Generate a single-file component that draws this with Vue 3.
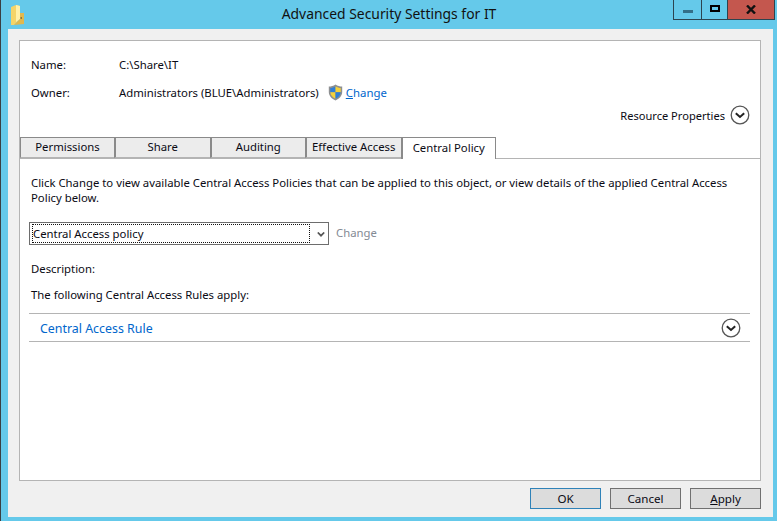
<script setup>
const tabs = ['Permissions', 'Share', 'Auditing', 'Effective Access', 'Central Policy']
const active = 'Central Policy'
</script>

<template>
  <div class="window">
    <header class="titlebar">
      <div class="tb-left">
        <svg class="folder" width="14" height="20" viewBox="0 0 14 20">
          <path d="M0 2 L5 0 L9 1 L9 14 L3 20 L0 20 Z" fill="#f4d468" />
          <path d="M5 0 L9 1 L9 14 L5 17 Z" fill="#fff0a8" />
          <path d="M9 8 L13 8 L13 19 L3 20 L9 14 Z" fill="#e0b84e" />
          <path d="M9.5 12 L11 12 L11 14 L9.5 14 Z" fill="#8a7a3a" />
        </svg>
      </div>
      <div class="title">Advanced Security Settings for IT</div>
      <div class="caption">
        <div class="cbtn min"><span class="min-bar"></span></div>
        <div class="cbtn max"><span class="max-box"></span></div>
        <div class="cbtn close">
          <svg width="10" height="9" viewBox="0 0 10 9"><path d="M1 0.5 L9 8.5 M9 0.5 L1 8.5" stroke="#111" stroke-width="2.4" fill="none" /></svg>
        </div>
      </div>
    </header>

    <div class="body">
      <main class="panel">
        <div class="info">
          <div class="row name-row"><span class="lbl">Name:</span><span>C:\Share\IT</span></div>
          <div class="row owner-row">
            <span class="lbl">Owner:</span>
            <span>Administrators (BLUE\Administrators)</span>
            <svg class="shield" width="15" height="17" viewBox="0 0 15 17">
              <path d="M7.5 0.5 C5.5 2 3 2.6 0.8 2.6 L0.8 8 C0.8 12 4 15 7.5 16.5 C11 15 14.2 12 14.2 8 L14.2 2.6 C12 2.6 9.5 2 7.5 0.5 Z" fill="#8d8f91" />
              <path d="M7.5 2.2 L7.5 8.2 L2.3 8.2 L2.3 4 C4 3.9 6 3.3 7.5 2.2 Z" fill="#2f7fd6" />
              <path d="M7.5 2.2 C9 3.3 11 3.9 12.7 4 L12.7 8.2 L7.5 8.2 Z" fill="#f4d23c" />
              <path d="M2.3 8.2 L7.5 8.2 L7.5 14.8 C5 13.6 2.5 11.2 2.3 8.2 Z" fill="#f4d23c" />
              <path d="M7.5 8.2 L12.7 8.2 C12.5 11.2 10 13.6 7.5 14.8 Z" fill="#2f7fd6" />
            </svg>
            <span class="link"><u>C</u>hange</span>
          </div>
          <div class="res">
            <span>Resource Properties</span>
            <svg class="chev" width="20" height="20" viewBox="0 0 20 20">
              <circle cx="10" cy="10" r="8.8" fill="#fff" stroke="#555" stroke-width="1.3" />
              <path d="M5.8 8.2 L10 12 L14.2 8.2" fill="none" stroke="#222" stroke-width="2" />
            </svg>
          </div>
        </div>

        <nav class="tabs">
          <div v-for="t in tabs" :key="t" class="tab" :class="{ on: t === active }">{{ t }}</div>
        </nav>

        <section class="content">
          <p class="desc">Click Change to view available Central Access Policies that can be applied to this object, or view details of the applied Central Access<br>Policy below.</p>
          <div class="select-row">
            <div class="select">
              <div class="focus">Central Access policy</div>
              <svg class="arrow" width="8" height="5" viewBox="0 0 8 5"><path d="M0.8 0.5 L4 3.7 L7.2 0.5" fill="none" stroke="#555" stroke-width="1.7" /></svg>
            </div>
            <span class="disabled">Change</span>
          </div>
          <div class="desc-label">Description:</div>
          <div class="rules-label">The following Central Access Rules apply:</div>
          <div class="rule">
            <span class="rule-name">Central Access Rule</span>
            <svg class="chev" width="20" height="20" viewBox="0 0 20 20">
              <circle cx="10" cy="10" r="8.8" fill="#fff" stroke="#555" stroke-width="1.3" />
              <path d="M5.8 8.2 L10 12 L14.2 8.2" fill="none" stroke="#222" stroke-width="2" />
            </svg>
          </div>
        </section>
      </main>

      <footer class="buttons">
        <div class="btn default">OK</div>
        <div class="btn">Cancel</div>
        <div class="btn"><span><u>A</u>pply</span></div>
      </footer>
    </div>
  </div>
</template>

<style>
html, body { margin: 0; padding: 0; background: #65c9ea; }
</style>

<style scoped>
.window {
  width: 777px;
  height: 521px;
  box-sizing: border-box;
  background: #65c9ea;
  border-left: 1px solid #3a3f42;
  display: flex;
  flex-direction: column;
  font-family: "Noto Sans", "Open Sans", sans-serif;
  font-size: 11.33px;
  color: #0a0a14;
  overflow: hidden;
}
.titlebar {
  height: 29px;
  flex: none;
  display: grid;
  grid-template-columns: 1fr auto 1fr;
}
.tb-left { padding: 5px 0 0 10px; }
.folder { display: block; }
.title {
  font-size: 13.9px;
  line-height: 18px;
  padding-top: 5px;
  color: #111;
}
.caption {
  justify-self: end;
  display: flex;
  align-items: flex-start;
  margin-right: 2px;
  height: 20px;
  border: 1px solid #2c4450;
  border-top: none;
  box-sizing: border-box;
}
.cbtn {
  height: 19px;
  display: flex;
  align-items: center;
  justify-content: center;
  box-sizing: border-box;
}
.min { width: 28px; border-right: 1px solid #2c4450; }
.max { width: 26px; border-right: 1px solid #2c4450; }
.close { width: 46px; background: #c4574e; }
.min-bar { width: 10px; height: 3px; background: #336f88; margin-top: 3px; }
.max-box { width: 6px; height: 3px; border: 2.5px solid #000; margin-top: -2px; }
.body {
  flex: 1;
  margin: 0 4px 4px 7px;
  background: #f0f0f0;
  padding: 11px 12px 0 11px;
  display: flex;
  flex-direction: column;
  min-height: 0;
}
.panel {
  height: 441px;
  box-sizing: border-box;
  flex: none;
  background: #fff;
  border: 1px solid #b4b4b4;
  display: flex;
  flex-direction: column;
}
.info { height: 96px; flex: none; padding: 16px 0 0 11px; box-sizing: border-box; }
.row { display: flex; align-items: center; height: 16px; line-height: 16px; }
.lbl { width: 88px; flex: none; }
.owner-row { margin-top: 12px; }
.shield { margin-left: 9px; margin-right: 3px; flex: none; margin-top: -1px; }
.link { color: #0066cc; font-size: 11.4px; }
.res {
  display: flex;
  justify-content: flex-end;
  align-items: center;
  height: 20px;
  margin-top: 4px;
  padding-right: 10px;
  font-size: 11.1px;
}
.res .chev { margin-left: 5px; }
.chev { display: block; flex: none; }
.tabs {
  height: 22px;
  flex: none;
  display: flex;
  box-sizing: border-box;
  border-bottom: 1px solid #b4b4b4;
}
.tab {
  width: 95.5px;
  height: 21px;
  box-sizing: border-box;
  text-align: center;
  line-height: 18px;
  background: #ececec;
  border: 1px solid #8a8a8a;
  border-bottom-color: #b4b4b4;
  border-right-width: 0;
  white-space: nowrap;
}
.tab:not(:first-child) { border-left-width: 2px; }
.tab:first-child { width: 94px; }
.tab.on {
  background: #fff;
  height: 22px;
  border-right-width: 1px;
  border-bottom: none;
  position: relative;
  line-height: 19px;
}
.content { padding: 16px 10px 0 9px; flex: 1; }
.desc { margin: 0 0 0 2px; line-height: 15px; white-space: nowrap; }
.select-row { display: flex; align-items: center; margin-top: 17px; }
.select {
  width: 300px;
  height: 23px;
  box-sizing: border-box;
  border: 1px solid #6d6d6d;
  display: flex;
  align-items: center;
  padding: 0 0 0 2px;
}
.focus {
  width: 278px;
  height: 19px;
  box-sizing: border-box;
  border: 1px dotted #111;
  line-height: 17px;
  padding-left: 0;
}
.arrow { flex: none; margin: 1px 0 0 7px; }
.disabled { margin-left: 7px; color: #838a94; margin-top: -3px; }
.desc-label { margin: 16px 0 0 2px; line-height: 16px; }
.rules-label { margin: 10px 0 0 2px; line-height: 16px; }
.rule {
  margin-top: 10px;
  height: 29px;
  box-sizing: border-box;
  border-top: 1px solid #b4b4b4;
  border-bottom: 1px solid #b4b4b4;
  display: flex;
  justify-content: space-between;
  align-items: center;
  padding: 0 9px 0 11px;
}
.rule-name { color: #0066cc; font-size: 12.4px; padding-top: 2px; }
.buttons {
  display: flex;
  justify-content: flex-end;
  gap: 9px;
  padding-top: 7px;
}
.btn {
  width: 71px;
  height: 21px;
  box-sizing: border-box;
  background: #dcdcdc;
  border: 1px solid #707070;
  text-align: center;
  line-height: 19px;
  font-size: 11.6px;
}
.btn.default { border-color: #2f82b8; }
</style>
